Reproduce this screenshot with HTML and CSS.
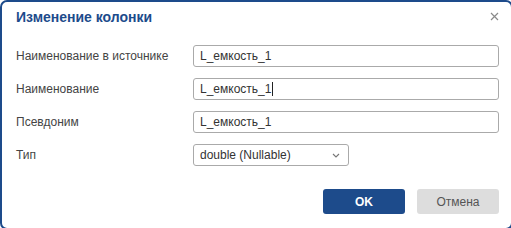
FILE: index.html
```html
<!DOCTYPE HTML>
<html>
<head>
<meta charset="utf-8">
<title>Изменение колонки</title>
<link rel="stylesheet" href="styles.css">
</head>
<body>
	<div class="dialog">
		<div class="dialog-head">
			<span class="dialog-title">Изменение колонки</span>
			<span class="dialog-close">
				<svg width="9" height="9" viewBox="0 0 9 9"><path d="M1 1L8 8M8 1L1 8" stroke="#8a8a8a" stroke-width="1.2" fill="none"/></svg>
			</span>
		</div>
		<div class="form">
			<label class="form-label">Наименование в источнике</label>
			<div class="field">L_емкость_1</div>
			<label class="form-label">Наименование</label>
			<div class="field">L_емкость_1<span class="caret"></span></div>
			<label class="form-label">Псевдоним</label>
			<div class="field">L_емкость_1</div>
			<label class="form-label">Тип</label>
			<div class="field field-select">
				<span>double (Nullable)</span>
				<svg width="8" height="5" viewBox="0 0 8 5"><path d="M1 1L4 4L7 1" stroke="#777" stroke-width="1.1" fill="none"/></svg>
			</div>
		</div>
		<div class="dialog-foot">
			<button class="btn btn-primary">OK</button>
			<button class="btn btn-default">Отмена</button>
		</div>
	</div>
</body>
</html>
```

FILE: styles.css
```css
html, body {
 margin: 0;
 padding: 0;
 background: #fff;
 overflow: hidden;
}
body {
 font: 12px "Liberation Sans", Arial, sans-serif;
 color: #333;
}
.dialog {
 box-sizing: border-box;
 width: 513px;
 height: 230px;
 border: 2px solid #1d4b8b;
 border-radius: 7px;
 background: #fff;
 padding: 0 12px 0 14px;
}
.dialog-head {
 display: flex;
 justify-content: space-between;
 align-items: center;
 height: 18px;
 padding-top: 6px;
}
.dialog-title {
 font-size: 14px;
 font-weight: bold;
 color: #1d4b8b;
}
.dialog-close {
 display: flex;
 margin-right: 0;
 margin-top: -2px;
}
.form {
 display: grid;
 grid-template-columns: 177px 1fr;
 row-gap: 11px;
 margin-top: 19px;
 align-items: center;
}
.form-label {
 color: #444;
}
.field {
 box-sizing: border-box;
 height: 22px;
 border: 1px solid #aaa;
 border-radius: 3px;
 padding: 0 6px;
 line-height: 20px;
 color: #333;
 display: flex;
 align-items: center;
}
.caret {
 display: inline-block;
 width: 1px;
 height: 14px;
 background: #222;
 margin-left: 1px;
}
.field-select {
 width: 156px;
 justify-content: space-between;
 padding-right: 8px;
}
.dialog-foot {
 display: flex;
 justify-content: flex-end;
 gap: 12px;
 margin-top: 23px;
}
.btn {
 width: 82px;
 height: 25px;
 border: 0;
 border-radius: 3px;
 font: 12px "Liberation Sans", Arial, sans-serif;
 cursor: pointer;
}
.btn-primary {
 background: #1d4b8b;
 color: #fff;
 font-weight: bold;
}
.btn-default {
 background: #ddd;
 color: #555;
}
```
